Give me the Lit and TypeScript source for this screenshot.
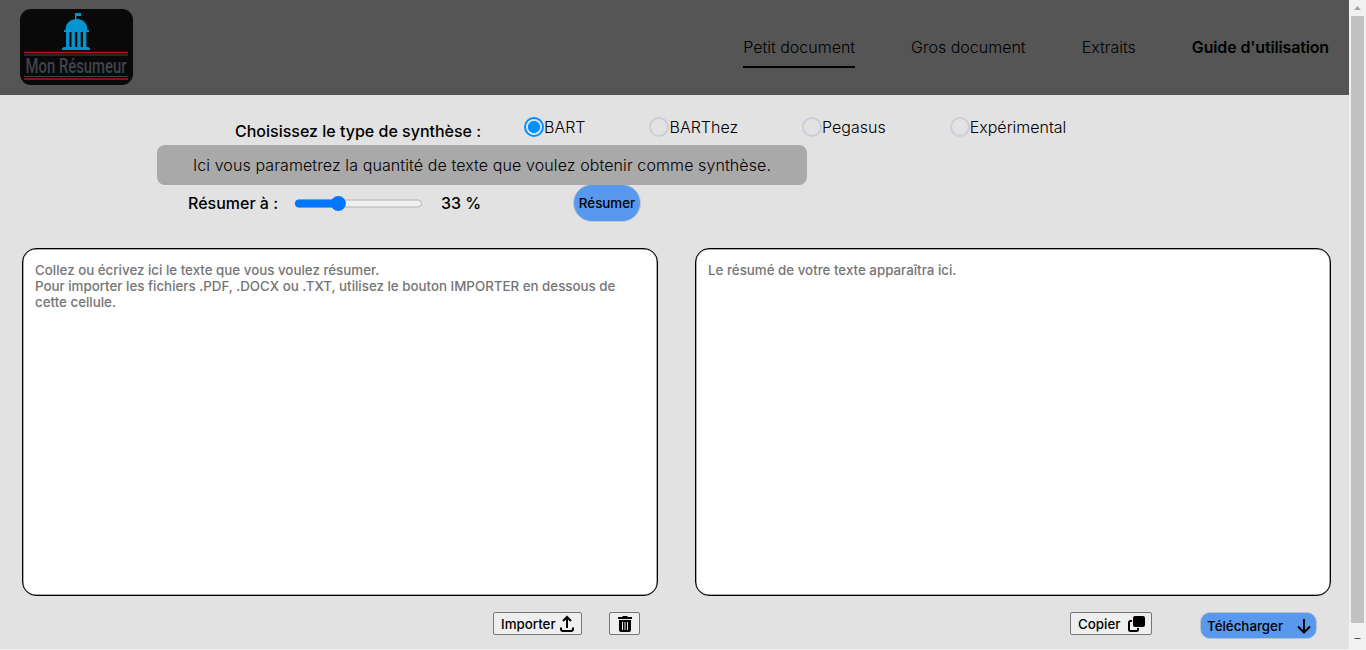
import { LitElement, html, css, svg } from "lit";
import { customElement, state } from "lit/decorators.js";

const MODELS = ["BART", "BARThez", "Pegasus", "Expérimental"];
const PAGES = ["Petit document", "Gros document", "Extraits"];

const columns = [62.5, 68.8, 75.2, 81.5];

@customElement("app-root")
class AppRoot extends LitElement {
  static styles = css`
    :host {
      display: flex;
      width: 1366px;
      height: 650px;
      overflow: hidden;
      font: 300 16px/20px Inter, sans-serif;
      color: #000;
      background: #f1f1f1;
    }
    * { box-sizing: border-box; }
    .page { width: 1349px; height: 649px; background: #e2e2e2; display: flex; flex-direction: column; }
    header { height: 95px; flex: none; background: #555; display: flex; align-items: flex-start; padding: 9px 20px 0; }
    .logo { width: 113px; height: 76px; display: block; }
    nav { margin-left: auto; display: flex; gap: 56px; padding-top: 28px; }
    .link { height: 31px; color: #000; white-space: nowrap; }
    .link.on { border-bottom: 2px solid #000; }
    .link.guide { font-weight: 600; letter-spacing: -0.15px; }
    .models { position: relative; height: 50px; flex: none; display: flex; padding-left: 235px; }
    .label { font-weight: 500; white-space: nowrap; }
    .models .label { width: 289px; padding-top: 26px; }
    .options { display: flex; gap: 64px; padding-top: 22px; }
    .option { display: flex; height: 20px; white-space: nowrap; }
    .radio { width: 20px; height: 20px; border: 2px solid #cbced9; border-radius: 50%; flex: none; }
    .radio.on { border-color: #0090ff; background: radial-gradient(circle, #0090ff 5.7px, #e2e2e2 6.3px); }
    .tip { position: absolute; left: 157px; top: 50px; width: 650px; height: 40px; border-radius: 8px; background: #a9a9a9; text-align: center; line-height: 41px; letter-spacing: .1px; white-space: nowrap; }
    .settings { height: 38px; margin-top: 39px; flex: none; display: flex; align-items: center; padding-left: 188px; }
    .settings .label { width: 107px; }
    .slider { width: 127px; height: 15px; display: block; }
    .percent { width: 151px; padding-left: 19px; font-weight: 500; }
    button { font: 500 13.333px/16px Inter, sans-serif; color: #000; padding: 0; margin: 0; white-space: nowrap; }
    .run { width: 68px; height: 38px; border-radius: 19px; border: 1px solid #c4c8d0; background: #5898ed; }
    .panels { display: flex; gap: 37px; margin-top: 26px; padding-left: 22px; flex: none; }
    .panel { width: 636px; height: 348px; border: 1.5px solid #000; box-shadow: inset 0 0 0 .5px #555; border-radius: 14px; background: #fff; color: #757575; font-weight: 500; font-size: 13.333px; line-height: 16px; padding: 13px 12px; white-space: pre-line; }
    .actions { display: flex; padding: 16px 0 0 493px; align-items: flex-start; }
    .tool { height: 23px; border: 1px solid #767676; border-radius: 2px; background: #efefef; display: flex; align-items: center; }
    .import { width: 89px; padding-left: 7px; gap: 3px; }
    .trash { width: 31px; margin-left: 27px; padding-left: 7px; }
    .copy { width: 82px; margin-left: 430px; padding-left: 7px; gap: 7px; }
    .download { width: 117px; height: 27px; margin-left: 48px; border: 1px solid #b9c2cf; border-radius: 10px; background: #5898ed; display: flex; align-items: center; justify-content: space-between; padding: 1px 5px 0 6px; }
    .scroll { width: 17px; height: 650px; background: #f1f1f1; display: flex; flex-direction: column; align-items: center; }
    .arrow { width: 17px; height: 16px; display: block; }
    .thumb { width: 13px; height: 607px; background: #c1c1c1; }
    svg { flex: none; }
  `;

  @state() private model = 0;

  render() {
    return html`
      <div class="page">
        <header>
          <svg class="logo" viewBox="0 0 113 76">
            <rect width="113" height="76" rx="11" fill="#090909" />
            <g fill="#0294cf">
              <path d="M55 11V4h6v3h-4.500v3h2a11 10 0 0 1 9 11h1.500v2H44v-2h1.500a11 10 0 0 1 9.500-11Z" />
              <path d="M42 41v-2l2-1h24l2 1v2Z" />
              ${[46, 51.5, 57.3, 63].map((x) => svg`<rect x=${x} y="23" width="3.400" height="15" />`)}
            </g>
            <path d="M4 43.500h104M4 70h104" stroke="#bd1015" stroke-width="1.500" />
            <path d="M4 46h104M4 67.500h104" stroke="#41434d" stroke-width="1.200" />
            <text x="5.500" y="64" textLength="101" lengthAdjust="spacingAndGlyphs" font-family="Roboto, sans-serif" font-size="20" font-weight="500" fill="#41434d">Mon Résumeur</text>
          </svg>
          <nav>
            ${PAGES.map((p, i) => html`<span class="link ${i === 0 ? "on" : ""}">${p}</span>`)}
            <span class="link guide">Guide d'utilisation</span>
          </nav>
        </header>
        <div class="models">
          <span class="label">Choisissez le type de synthèse :</span>
          <div class="options">
            ${MODELS.map((m, i) => html`<span class="option" @click=${() => (this.model = i)}><i class="radio ${i === this.model ? "on" : ""}"></i>${m}</span>`)}
          </div>
          <div class="tip">Ici vous parametrez la quantité de texte que voulez obtenir comme synthèse.</div>
        </div>
        <div class="settings">
          <span class="label">Résumer à :</span>
          <svg class="slider" viewBox="0 0 127 15">
            <rect x=".5" y="4" width="126" height="7" rx="3.500" fill="#efefef" stroke="#b2b2b2" />
            <path d="M4 7.500h39" stroke="#0075ff" stroke-width="8" stroke-linecap="round" />
            <circle cx="43.300" cy="7.500" r="7.500" fill="#0075ff" />
          </svg>
          <span class="percent">33 %</span>
          <button class="run">Résumer</button>
        </div>
        <div class="panels">
          <div class="panel">Collez ou écrivez ici le texte que vous voulez résumer.
Pour importer les fichiers .PDF, .DOCX ou .TXT, utilisez le bouton IMPORTER en dessous de cette cellule.</div>
          <div class="panel">Le résumé de votre texte apparaîtra ici.</div>
        </div>
        <div class="actions">
          <button class="tool import">Importer
            <svg width="16" height="18" viewBox="0 0 16 18" fill="none" stroke="#000" stroke-width="2"><path d="M8 13V2M4 6l4-4 4 4M2 12.500V14q0 2 2 2h8q2 0 2-2v-1.500" /></svg>
          </button>
          <button class="tool trash">
            <svg width="16" height="18" viewBox="0 0 16 18"><path d="M1 2h4l1-1h4l1 1h4v2H1ZM2 5h12v10q0 2-2 2H4q-2 0-2-2Z" /><path d="M5.500 7v8M8 7v8M10.500 7v8" stroke="#efefef" /></svg>
          </button>
          <button class="tool copy">Copier
            <svg width="18" height="18" viewBox="0 0 18 18"><rect x="6" y="1" width="12" height="11" rx="2" /><path d="M5 6H3.500Q2 6 2 7.500v7Q2 16 3.500 16h6q1.500 0 1.500-1.500V13" fill="none" stroke="#000" stroke-width="2" /></svg>
          </button>
          <button class="download">Télécharger
            <svg width="14" height="15" viewBox="0 0 14 15" fill="none" stroke="#000" stroke-width="2"><path d="M7 0v13M1 7.500l6 6 6-6" /></svg>
          </button>
        </div>
      </div>
      <div class="scroll">
        <svg class="arrow" viewBox="0 0 17 16"><path d="M5 10h7L8.500 6Z" fill="#a3a3a3" /></svg>
        <div class="thumb"></div>
        <svg class="arrow" viewBox="0 -7 17 16"><path d="M5 8h7L8.500 12Z" fill="#505050" /></svg>
      </div>
    `;
  }
}
